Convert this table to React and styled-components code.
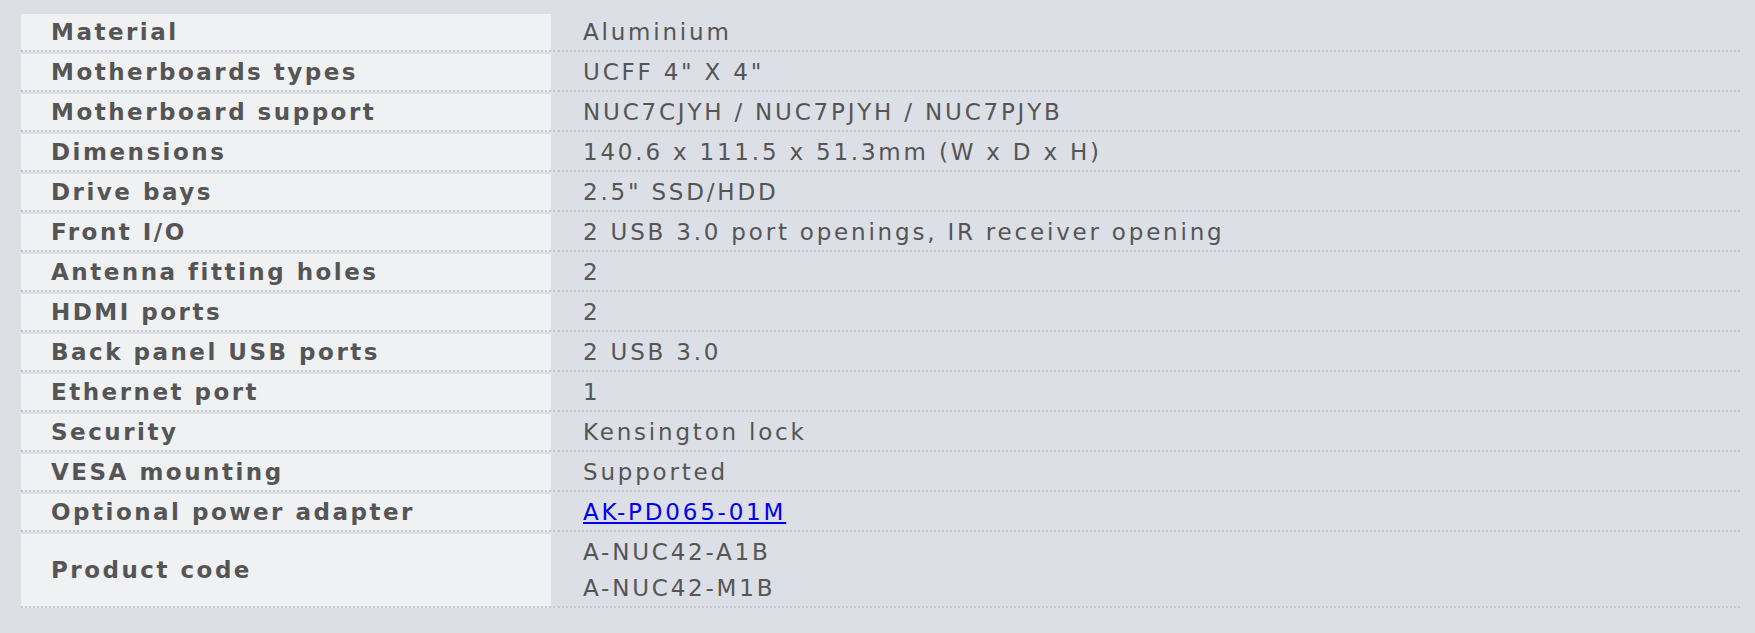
import React from "react";
import styled, { createGlobalStyle } from "styled-components";

const Global = createGlobalStyle`
  html, body { margin: 0; padding: 0; background: #dcdfe6; }
  body { font-family: "DejaVu Sans", Verdana, sans-serif; }
`;

const Page = styled.div`
  padding: 14px 13px 20px 21px;
  min-height: 633px;
  box-sizing: border-box;
  background: #dcdfe6;
`;

const Specs = styled.div`
  display: grid;
  grid-template-columns: 530px 1fr;
  column-gap: 2px;
  row-gap: 2px;
  width: 1719px;
`;

const Cell = styled.div`
  box-sizing: border-box;
  border-bottom: 2px dotted #c4c6cb;
  padding: 0 30px;
  font-size: 23px;
  line-height: 36px;
  color: #555;
  white-space: nowrap;
`;

const Label = styled(Cell)`
  background: #f0f1f3;
  font-weight: bold;
  letter-spacing: 2.5px;
  display: flex;
  align-items: center;
`;

const Value = styled(Cell)`
  font-weight: normal;
  letter-spacing: 2.8px;
`;

const Line = styled.div``;

const Link = styled.a`
  color: #0000ee;
  text-decoration: underline;
`;

const rows = [
  ["Material", ["Aluminium"]],
  ["Motherboards types", ['UCFF 4" X 4"']],
  ["Motherboard support", ["NUC7CJYH / NUC7PJYH / NUC7PJYB"]],
  ["Dimensions", ["140.6 x 111.5 x 51.3mm (W x D x H)"]],
  ["Drive bays", ['2.5" SSD/HDD']],
  ["Front I/O", ["2 USB 3.0 port openings, IR receiver opening"]],
  ["Antenna fitting holes", ["2"]],
  ["HDMI ports", ["2"]],
  ["Back panel USB ports", ["2 USB 3.0"]],
  ["Ethernet port", ["1"]],
  ["Security", ["Kensington lock"]],
  ["VESA mounting", ["Supported"]],
  ["Optional power adapter", [{ link: "AK-PD065-01M" }]],
  ["Product code", ["A-NUC42-A1B", "A-NUC42-M1B"]],
];

export default function App() {
  return (
    <>
      <Global />
      <Page>
        <Specs>
          {rows.map(([label, values]) => (
            <React.Fragment key={label}>
              <Label>{label}</Label>
              <Value>
                {values.map((v, i) =>
                  typeof v === "string" ? (
                    <Line key={i}>{v}</Line>
                  ) : (
                    <Line key={i}>
                      <Link href="#">{v.link}</Link>
                    </Line>
                  )
                )}
              </Value>
            </React.Fragment>
          ))}
        </Specs>
      </Page>
    </>
  );
}
